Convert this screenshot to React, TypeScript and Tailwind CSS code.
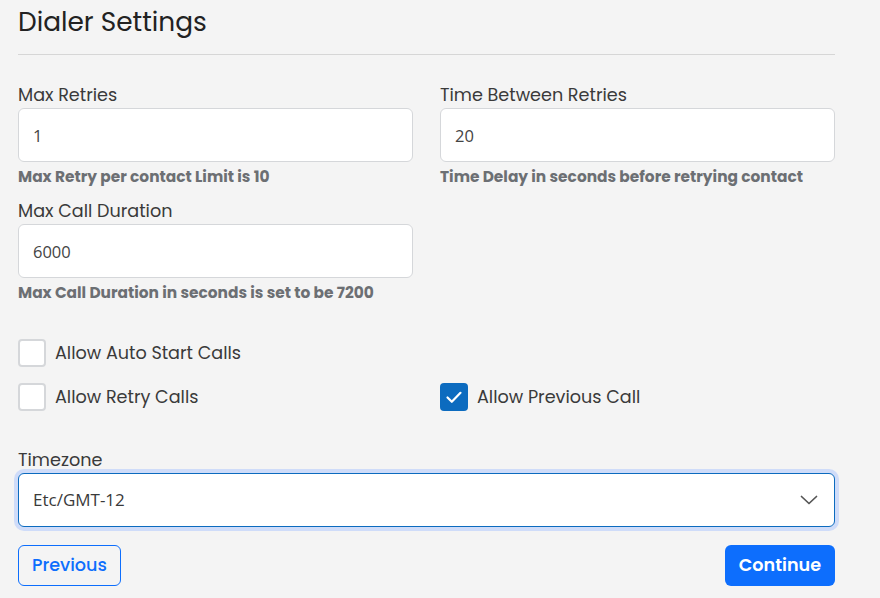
import React from "react";

const font = { fontFamily: "Poppins, 'Open Sans', 'Noto Sans', sans-serif" };

function Field({ label, value, help }: { label: string; value: string; help?: string }) {
  return (
    <div>
      <label className="block text-[17.6px] leading-[26px] text-[#3a3a3a]">{label}</label>
      <input
        readOnly
        value={value}
        className="block w-full h-[54px] rounded-[6px] border border-[#d5d7da] bg-white pl-[14px] font-['Open_Sans',sans-serif] text-[16.5px] text-[#444] outline-none"
      />
      {help && (
        <p className="mt-[4px] text-[15.4px] leading-[22px] font-bold text-[#6c6f73]">{help}</p>
      )}
    </div>
  );
}

function Check({ label, checked }: { label: string; checked?: boolean }) {
  return (
    <label className="flex items-center gap-[9px] h-[28px]">
      <span
        className={
          checked
            ? "flex items-center justify-center w-[28px] h-[28px] rounded-[4px] bg-[#0c6bbf]"
            : "w-[28px] h-[28px] rounded-[4px] border-2 border-[#d5d7da] bg-white"
        }
      >
        {checked && (
          <svg width="20" height="20" viewBox="0 0 20 20" fill="none">
            <path d="M3.5 10.5l4.3 4.3 8.7-9" stroke="white" strokeWidth="2.2" strokeLinecap="round" strokeLinejoin="round" />
          </svg>
        )}
      </span>
      <span className="text-[17.6px] text-[#3a3a3a]">{label}</span>
    </label>
  );
}

export default function App() {
  return (
    <div className="min-h-[598px] bg-[#f4f4f4] pl-[18px] pr-[45px]" style={font}>
      <h1 className="pt-[4px] text-[26.4px] leading-[36px] text-[#222] pb-[14px] border-b border-[#d6d6d6]">
        Dialer Settings
      </h1>

      <div className="grid grid-cols-2 gap-x-[27px] gap-y-[10px] mt-[27px]">
        <Field label="Max Retries" value="1" help="Max Retry per contact Limit is 10" />
        <Field label="Time Between Retries" value="20" help="Time Delay in seconds before retrying contact" />
        <Field label="Max Call Duration" value="6000" help="Max Call Duration in seconds is set to be 7200" />
      </div>

      <div className="mt-[35px] flex flex-col gap-[16px]">
        <Check label="Allow Auto Start Calls" />
        <div className="grid grid-cols-2 gap-x-[27px]">
          <Check label="Allow Retry Calls" />
          <Check label="Allow Previous Call" checked />
        </div>
      </div>

      <div className="mt-[36px]">
        <label className="block text-[17.6px] leading-[26px] text-[#3a3a3a]">Timezone</label>
        <div className="h-[54px] rounded-[6px] border border-[#0c6bbf] bg-white ring-4 ring-[#cfdcf9] flex items-center gap-2 pl-3.5 pr-4">
          <span className="grow font-['Open_Sans',sans-serif] text-[17px] text-[#3a3a3a]">Etc/GMT-12</span>
          <svg width="18" height="10" viewBox="0 0 18 10" fill="none">
            <path d="M1.5 1.5L9 8.5l7.5-7" stroke="#555" strokeWidth="1.7" strokeLinecap="round" strokeLinejoin="round" />
          </svg>
        </div>
      </div>

      <div className="mt-[18px] flex justify-between">
        <button className="h-[41px] px-[13px] rounded-[6px] border border-[#0d6efd] text-[#0d6efd] font-medium text-[17.6px]">
          Previous
        </button>
        <button className="h-[41px] px-[14px] rounded-[6px] bg-[#0d6efd] text-white font-semibold text-[17.6px]">
          Continue
        </button>
      </div>
    </div>
  );
}
